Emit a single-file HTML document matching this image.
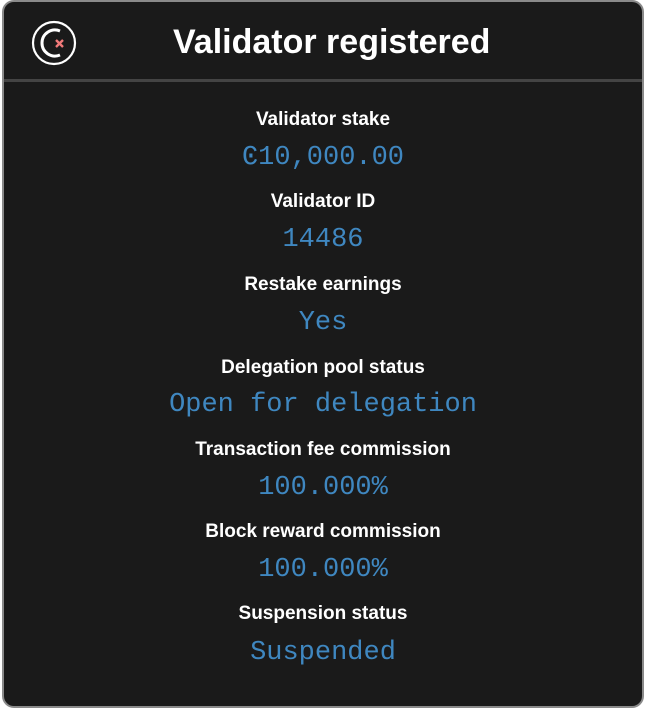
<!DOCTYPE html>
<html><head><style>
html,body{margin:0;padding:0;background:#fff;width:646px;height:708px;overflow:hidden}
.p{position:absolute;left:2px;top:0;width:638px;height:704px;background:#1a1a1a;border:2px solid #8a8a8a;border-radius:12px;}
.hr{position:absolute;left:4px;top:79px;width:638px;height:3px;background:#444}
.t{position:absolute;left:173px;top:23px;font:bold 34px "Liberation Sans",sans-serif;color:#fff;white-space:nowrap}
.l{position:absolute;left:0;width:646px;text-align:center;font:bold 19px "Liberation Sans",sans-serif;color:#fff}
.v{position:absolute;left:0;width:646px;text-align:center;font:27px "Liberation Mono",monospace;color:#3f87c0}
</style></head><body>
<div class="p"></div>
<div class="hr"></div>
<svg style="position:absolute;left:30px;top:19px" width="50" height="50" viewBox="0 0 50 50">
<circle cx="24" cy="24" r="21" fill="none" stroke="#fff" stroke-width="2.2"/>
<path d="M30 12 A13 13 0 1 0 30 36" fill="none" stroke="#fff" stroke-width="3"/>
<path d="M26 21 L33 28 M33 21 L26 28" stroke="#f07a7a" stroke-width="2.4"/>
</svg>
<div class="t">Validator registered</div>
<div class="l" style="top:109px">Validator stake</div><div class="v" style="top:143px">Ͼ10,000.00</div>
<div class="l" style="top:191px">Validator ID</div><div class="v" style="top:225px">14486</div>
<div class="l" style="top:274px">Restake earnings</div><div class="v" style="top:308px">Yes</div>
<div class="l" style="top:357px">Delegation pool status</div><div class="v" style="top:390px">Open for delegation</div>
<div class="l" style="top:439px">Transaction fee commission</div><div class="v" style="top:473px">100.000%</div>
<div class="l" style="top:521px">Block reward commission</div><div class="v" style="top:555px">100.000%</div>
<div class="l" style="top:603px">Suspension status</div><div class="v" style="top:638px">Suspended</div>
</body></html>
